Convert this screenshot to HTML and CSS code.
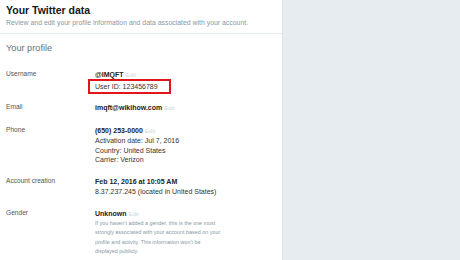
FILE: index.html
```html
<!DOCTYPE html>
<html lang="en">
<head>
    <meta charset="UTF-8">
    <meta name="viewport" content="width=device-width, initial-scale=1.0">
    <title>Your Twitter data</title>
    <link rel="stylesheet" href="styles.css">
</head>
<body>
    <div class="page">
        <main class="panel">
            <header class="panel-header">
                <h1>Your Twitter data</h1>
                <p>Review and edit your profile information and data associated with your account.</p>
            </header>
            <h2 class="section-title">Your profile</h2>
            <div class="fields">
                <div class="label">Username</div>
                <div class="value">
                    <div><strong>@IMQFT</strong> <span class="edit">Edit</span></div>
                    <div class="highlight">User ID: 123456789</div>
                </div>

                <div class="label">Email</div>
                <div class="value">
                    <div><strong>imqft@wikihow.com</strong> <span class="edit">Edit</span></div>
                </div>

                <div class="label">Phone</div>
                <div class="value">
                    <div><strong>(650) 253-0000</strong> <span class="edit">Edit</span></div>
                    <div>Activation date: Jul 7, 2016</div>
                    <div>Country: United States</div>
                    <div>Carrier: Verizon</div>
                </div>

                <div class="label">Account creation</div>
                <div class="value">
                    <div><strong>Feb 12, 2016 at 10:05 AM</strong></div>
                    <div>8.37.237.245 (located in United States)</div>
                </div>

                <div class="label">Gender</div>
                <div class="value">
                    <div><strong>Unknown</strong> <span class="edit">Edit</span></div>
                    <p class="note">If you haven't added a gender, this is the one most strongly associated with your account based on your profile and activity. This information won't be displayed publicly.</p>
                </div>
            </div>
        </main>
        <aside class="side"></aside>
    </div>
</body>
</html>
```

FILE: styles.css
```css
body {
    font-family: "Liberation Sans", Arial, sans-serif;
    margin: 0;
    padding: 0;
    background-color: #e6ecf0;
    color: #333;
}
.page {
    display: flex;
    height: 260px;
}
.panel {
    width: 282px;
    background: white;
    border-right: 1px solid #dde4e9;
}
.side {
    flex: 1;
}
.panel-header {
    padding: 4px 0 6px 6px;
    border-bottom: 1px solid #e6ecf0;
}
.panel-header h1 {
    margin: 0;
    font-size: 10.5px;
    line-height: 12px;
    color: #14171a;
}
.panel-header p {
    margin: 3px 0 0;
    font-size: 6.9px;
    line-height: 8px;
    color: #8899a6;
    white-space: nowrap;
}
.section-title {
    margin: 8px 0 0 6px;
    font-size: 9.2px;
    font-weight: normal;
    line-height: 12px;
    color: #66757f;
}
.fields {
    display: grid;
    grid-template-columns: 89px 1fr;
    row-gap: 12.5px;
    padding: 16px 6px 0;
}
.label {
    font-size: 6.6px;
    line-height: 9.5px;
    color: #555;
    margin-top: -1px;
}
.value {
    font-size: 7px;
    line-height: 9.5px;
    color: #333;
}
.value strong {
    color: #222;
}
.edit {
    font-size: 6px;
    color: #ccd6dd;
}
.highlight {
    width: fit-content;
    margin: -2px 0 -4px -7px;
    padding: 1px 11px 1px 5px;
    border: 2px solid #e3151b;
}
.note {
    margin: 0;
    width: 126px;
    font-size: 5.4px;
    line-height: 9.3px;
    color: #8899a6;
}
```
